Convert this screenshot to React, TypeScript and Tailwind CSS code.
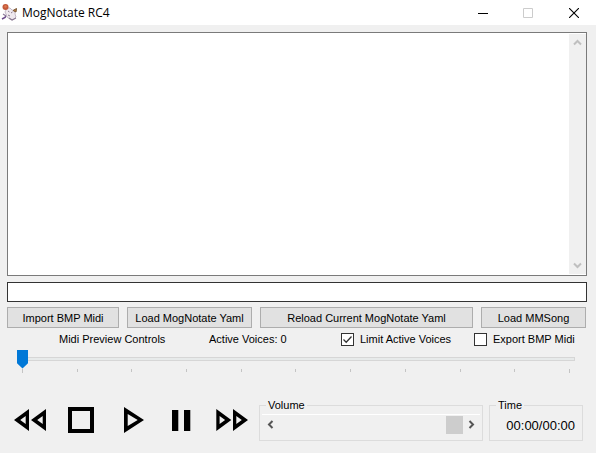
import { ReactNode, useState } from "react";

const TICKS = Array.from({ length: 11 }, (_, i) => i);

function MogIcon() {
  return (
    <svg width="17" height="17" viewBox="0 0 17 17" aria-hidden="true">
      <path d="M1 15l3-1.500 2-3" stroke="#6b4a8c" strokeWidth="1.6" fill="none" />
      <path d="M2 10l3 2" stroke="#8d7a99" strokeWidth="1.2" fill="none" />
      <path d="M6 4l3 0 2 2 3 1 0 3 1 3-3 3-3-1-3-2-1-3-1-2z" fill="#efe9ef" stroke="#c3b9c6" strokeWidth="1" />
      <path d="M8 14l3 2 4-2" stroke="#8c7b93" strokeWidth="1.2" fill="none" />
      <path d="M12 6.500l3.500-2-.5 3.500z" fill="#b9853f" stroke="#7a5636" strokeWidth="1" />
      <path d="M7 7l1.500 1M10 9l1.500-1M7 11l2 1" stroke="#8b7c90" strokeWidth="1" />
      <circle cx="4.500" cy="3" r="3" fill="#c4593a" />
      <circle cx="4.500" cy="2.500" r="1.200" fill="#dd7a50" />
    </svg>
  );
}

function Chevron({ d, className }: { d: string; className: string }) {
  return (
    <svg width="9" height="9" viewBox="0 0 9 9" className={className} aria-hidden="true">
      <path d={d} fill="none" stroke="currentColor" strokeWidth="2" />
    </svg>
  );
}

function PushButton({ children }: { children: ReactNode }) {
  return (
    <button className="h-[21px] border border-[#adadad] bg-[#e1e1e1] text-center whitespace-nowrap">
      {children}
    </button>
  );
}

function Check({ label, initial }: { label: string; initial: boolean }) {
  const [on, setOn] = useState(initial);
  return (
    <label className="flex items-center gap-1.5 whitespace-nowrap">
      <span className="grid">
        <input
          type="checkbox"
          checked={on}
          onChange={(e) => setOn(e.target.checked)}
          className="col-start-1 row-start-1 size-[13px] appearance-none border border-[#333] bg-white"
        />
        {on && (
          <svg width="13" height="13" viewBox="0 0 13 13" className="pointer-events-none col-start-1 row-start-1" aria-hidden="true">
            <path d="M2.5 6.5l2.700 2.700 5.300-5.700" fill="none" stroke="#333" strokeWidth="1.3" />
          </svg>
        )}
      </span>
      {label}
    </label>
  );
}

function Transport({ label, children }: { label: string; children: ReactNode }) {
  return (
    <button aria-label={label} className="flex w-[46px] justify-center">
      <svg width="40" height="28" viewBox="0 0 40 28" fillRule="evenodd" aria-hidden="true">
        {children}
      </svg>
    </button>
  );
}

export default function App() {
  return (
    <div className="flex min-h-screen flex-col bg-[#f0f0f0] font-['Liberation_Sans',Arial,sans-serif] text-[11px] leading-[14px] text-black">
      <header className="flex h-[25px] items-center bg-white pl-px">
        <MogIcon />
        <h1 className="ml-1 flex-1 font-['Open_Sans','Noto_Sans',sans-serif] text-[12px] leading-4">MogNotate RC4</h1>
        <button aria-label="Minimize" className="flex w-[42px] justify-center">
          <svg width="10" height="10" viewBox="0 0 10 10"><path d="M0 5.5h10" stroke="#000" /></svg>
        </button>
        <button aria-label="Maximize" disabled className="flex w-12 justify-center">
          <svg width="10" height="10" viewBox="0 0 10 10"><path d="M.5.5h9v9h-9z" fill="none" stroke="#ccc" /></svg>
        </button>
        <button aria-label="Close" className="flex w-11 justify-center">
          <svg width="10" height="10" viewBox="0 0 10 10"><path d="M0 0l10 10M10 0L0 10" stroke="#000" strokeWidth="1.1" /></svg>
        </button>
      </header>

      <main className="flex flex-col pt-[7px] pr-[9px] pl-[7px]">
        <div className="flex h-[244px] border border-[#7a7a7a] bg-white py-px">
          <textarea aria-label="Output" readOnly className="flex-1 resize-none bg-white outline-none" />
          <div className="flex w-[17px] flex-col justify-between bg-[#f0f0f0]">
            <button aria-label="Scroll up" className="flex h-[17px] items-center justify-center">
              <Chevron d="M1 6.5l3.5-3.5 3.5 3.5" className="text-[#bfbfbf]" />
            </button>
            <button aria-label="Scroll down" className="flex h-[17px] items-center justify-center">
              <Chevron d="M1 2.5l3.5 3.5 3.5-3.5" className="text-[#bfbfbf]" />
            </button>
          </div>
        </div>

        <input type="text" aria-label="Status" className="mt-1.5 h-5 w-full border border-[#333] bg-white px-1 outline-none" />

        <div className="mt-[5px] mr-px grid grid-cols-[112fr_125fr_213fr_105fr] gap-2">
          <PushButton>Import BMP Midi</PushButton>
          <PushButton>Load MogNotate Yaml</PushButton>
          <PushButton>Reload Current MogNotate Yaml</PushButton>
          <PushButton>Load MMSong</PushButton>
        </div>

        <div className="mt-1 grid grid-cols-[150fr_132fr_133fr_113fr] pl-[52px]">
          <span>Midi Preview Controls</span>
          <span>Active Voices: 0</span>
          <Check label="Limit Active Voices" initial={true} />
          <Check label="Export BMP Midi" initial={false} />
        </div>

        <div className="mt-[3px] mr-3 ml-2.5">
          <input
            type="range"
            aria-label="Song position"
            min="0"
            max="100"
            defaultValue="0"
            className="block h-[19px] w-full appearance-none bg-transparent [&::-webkit-slider-runnable-track]:h-1 [&::-webkit-slider-runnable-track]:border [&::-webkit-slider-runnable-track]:border-[#d6d6d6] [&::-webkit-slider-runnable-track]:bg-[#e7eaea] [&::-webkit-slider-thumb]:mt-[-8px] [&::-webkit-slider-thumb]:-ml-px [&::-webkit-slider-thumb]:h-[19px] [&::-webkit-slider-thumb]:w-[11px] [&::-webkit-slider-thumb]:appearance-none [&::-webkit-slider-thumb]:bg-[#0078d7] [&::-webkit-slider-thumb]:[clip-path:polygon(0_0,100%_0,100%_72%,50%_100%,0_72%)]"
          />
          <div className="mt-px flex items-start justify-between px-[5px]">
            {TICKS.map((i) => (
              <span key={i} className="h-[3px] w-px bg-[#c4c4c4] first:h-1 last:h-1" />
            ))}
          </div>
        </div>

        <div className="mt-[25px] flex">
          <div className="flex flex-1 items-center gap-1">
            <Transport label="Rewind">
              <path d="M19 3v22L4 14zM15.7 10l-5.5 4 5.5 4zM36 3v22L21 14zM32.7 10l-5.5 4 5.5 4z" />
            </Transport>
            <Transport label="Stop">
              <path d="M8 1h26v26H8zM12 5v18h18V5z" />
            </Transport>
            <Transport label="Play">
              <path d="M14 1v26l20-13zM17.7 8l10 6-10 6z" />
            </Transport>
            <Transport label="Pause">
              <path d="M12 4h6.3v21H12zM24 4h6.3v21H24z" />
            </Transport>
            <Transport label="Fast forward">
              <path d="M6.3 3v22l15-11zM9.6 10l5.5 4-5.5 4zM23 3v22l15-11zM26.3 10l5.5 4-5.5 4z" />
            </Transport>
          </div>

          <fieldset className="w-[224px] border border-[#dcdcdc] px-0.5 pb-1.5">
            <legend className="ml-1 px-0.5">Volume</legend>
            <div className="mt-0.5 flex h-5 items-center border-t border-white">
              <button aria-label="Volume down" className="flex w-[17px] items-center justify-center">
                <Chevron d="M6.5 1l-3.5 3.5 3.5 3.5" className="text-[#555]" />
              </button>
              <input
                type="range"
                aria-label="Volume level"
                min="0"
                max="100"
                defaultValue="100"
                className="h-[18px] min-w-0 flex-1 appearance-none bg-transparent [&::-webkit-slider-thumb]:h-[18px] [&::-webkit-slider-thumb]:w-[17px] [&::-webkit-slider-thumb]:appearance-none [&::-webkit-slider-thumb]:bg-[#cdcdcd]"
              />
              <button aria-label="Volume up" className="flex w-[17px] items-center justify-center">
                <Chevron d="M2.5 1l3.5 3.5-3.5 3.5" className="text-[#555]" />
              </button>
            </div>
          </fieldset>

          <fieldset className="mr-1 ml-1.5 w-[94px] border border-[#dcdcdc] pr-[7px]">
            <legend className="ml-1.5 px-0.5">Time</legend>
            <p className="mt-1.5 text-right text-[13px] leading-4">00:00/00:00</p>
          </fieldset>
        </div>
      </main>
    </div>
  );
}
